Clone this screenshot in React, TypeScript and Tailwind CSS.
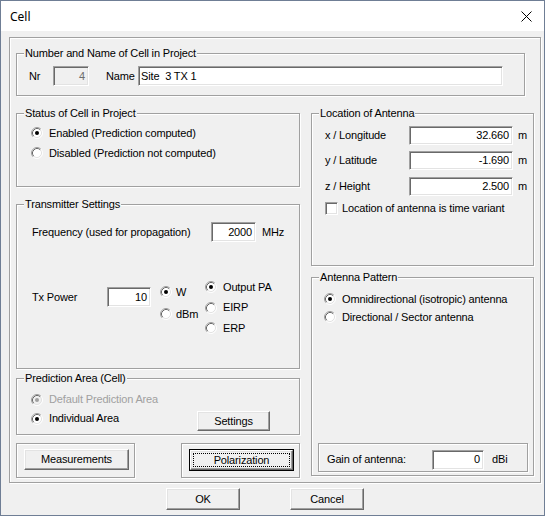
import React from "react";

const etched = "border border-[#a0a0a0] shadow-[1px_1px_0_#fff,inset_1px_1px_0_#fff]";
const sunken =
  "border border-t-[#a0a0a0] border-l-[#a0a0a0] border-r-white border-b-white shadow-[inset_1px_1px_0_#696969,inset_-1px_-1px_0_#e3e3e3]";
const raised =
  "border border-t-white border-l-white border-r-[#696969] border-b-[#696969] shadow-[inset_-1px_-1px_0_#a0a0a0,inset_1px_1px_0_#e3e3e3]";

function Group({ label, className = "", children }: { label: string; className?: string; children?: React.ReactNode }) {
  return (
    <div className={`relative shrink-0 ${etched} ${className}`}>
      <span className="absolute left-[7px] -top-[7px] px-[1px] bg-[#f0f0f0] leading-[13px] whitespace-nowrap">{label}</span>
      {children}
    </div>
  );
}

function Radio({ checked = false, disabled = false }: { checked?: boolean; disabled?: boolean }) {
  return (
    <svg width="12" height="12" viewBox="0 0 12 12" className="shrink-0">
      <circle cx="6" cy="6" r="5" fill={disabled ? "#f0f0f0" : "#fff"} />
      <path d="M2.11 9.89A5.5 5.5 0 0 1 9.89 2.11" fill="none" stroke="#a0a0a0" />
      <path d="M9.89 2.11A5.5 5.5 0 0 1 2.11 9.89" fill="none" stroke="#fff" />
      <path d="M2.82 9.18A4.5 4.5 0 0 1 9.18 2.82" fill="none" stroke="#696969" />
      <path d="M9.18 2.82A4.5 4.5 0 0 1 2.82 9.18" fill="none" stroke="#e3e3e3" />
      {checked && <circle cx="6" cy="6" r="2" fill={disabled ? "#a0a0a0" : "#000"} />}
    </svg>
  );
}

function RadioRow({
  label,
  checked = false,
  disabled = false,
  className = "",
  gap = "ml-[6px]",
}: {
  label: string;
  checked?: boolean;
  disabled?: boolean;
  className?: string;
  gap?: string;
}) {
  return (
    <div className={`flex items-center ${className}`}>
      <Radio checked={checked} disabled={disabled} />
      <span className={`${gap} whitespace-nowrap ${disabled ? "text-[#a0a0a0]" : ""}`}>{label}</span>
    </div>
  );
}

function Field({
  value,
  className = "",
  disabled = false,
  left = false,
}: {
  value: string;
  className?: string;
  disabled?: boolean;
  left?: boolean;
}) {
  return (
    <div
      className={`shrink-0 flex items-center whitespace-pre ${sunken} ${
        disabled ? "bg-[#f0f0f0] text-[#6d6d6d]" : "bg-white"
      } ${left ? "justify-start pl-[2px]" : "justify-end pr-[3px]"} ${className}`}
    >
      {value}
    </div>
  );
}

function Button({ label, className = "" }: { label: string; className?: string }) {
  return (
    <div className={`shrink-0 flex items-center justify-center bg-[#f0f0f0] ${raised} ${className}`}>{label}</div>
  );
}

function DefaultButton({ label, className = "" }: { label: string; className?: string }) {
  return (
    <div className={`shrink-0 border border-black flex ${className}`}>
      <div className={`flex-1 flex p-[2px] bg-[#f0f0f0] ${raised}`}>
        <div className="flex-1 flex items-center justify-center border border-dotted border-black">{label}</div>
      </div>
    </div>
  );
}

export default function App() {
  return (
    <div className="w-[545px] h-[516px] border border-[#6f7e95] bg-[#f0f0f0] flex flex-col text-black text-[11px] tracking-[-0.15px] leading-[13px] font-['Liberation_Sans',Arial,sans-serif] overflow-hidden">
      {/* Title bar */}
      <div className="h-[30px] shrink-0 bg-white flex items-center justify-between pl-[9px] pr-[12px]">
        <span className="text-[12px] tracking-normal font-['Noto_Sans',sans-serif]">Cell</span>
        <svg width="11" height="11" viewBox="0 0 11 11">
          <path d="M0.5 0.5L10.5 10.5M10.5 0.5L0.5 10.5" stroke="#000" strokeWidth="1" />
        </svg>
      </div>

      {/* Main frame */}
      <div className={`ml-[8px] mt-[6px] w-[532px] h-[446px] shrink-0 pl-[6px] pt-[15px] ${etched}`}>
        <Group label="Number and Name of Cell in Project" className="w-[509px] h-[43px] pl-[12px] pt-[12px]">
          <div className="flex items-center h-[20px]">
            <span className="w-[24px]">Nr</span>
            <Field value="4" disabled className="w-[36px] h-[20px]" />
            <span className="ml-[17px] w-[32px]">Name</span>
            <Field value="Site  3 TX 1" left className="w-[365px] h-[20px]" />
          </div>
        </Group>

        <div className="flex items-start mt-[17px]">
          {/* Left column */}
          <div className="w-[284px] flex flex-col shrink-0">
            <Group label="Status of Cell in Project" className="h-[74px] pl-[14px] pt-[9px]">
              <RadioRow label="Enabled (Prediction computed)" checked className="h-[20px]" />
              <RadioRow label="Disabled (Prediction not computed)" className="h-[20px]" />
            </Group>

            <Group label="Transmitter Settings" className="mt-[17px] h-[165px] pl-[15px] pt-[17px]">
              <div className="flex items-center h-[20px]">
                <span className="w-[179px] whitespace-nowrap">Frequency (used for propagation)</span>
                <Field value="2000" className="w-[45px] h-[20px]" />
                <span className="ml-[6px]">MHz</span>
              </div>
              <div className="flex items-start mt-[35px]">
                <div className="flex items-center mt-[10px] h-[20px]">
                  <span className="w-[75px]">Tx Power</span>
                  <Field value="10" className="w-[44px] h-[20px]" />
                </div>
                <div className="ml-[9px] w-[45px] mt-[4px] flex flex-col">
                  <RadioRow label="W" checked gap="ml-[4px]" className="h-[22px]" />
                  <RadioRow label="dBm" gap="ml-[4px]" className="h-[22px]" />
                </div>
                <div className="flex flex-col">
                  <RadioRow label="Output PA" checked className="h-[20.5px]" />
                  <RadioRow label="EIRP" className="h-[20.5px]" />
                  <RadioRow label="ERP" className="h-[20.5px]" />
                </div>
              </div>
            </Group>

            <Group label="Prediction Area (Cell)" className="mt-[9px] h-[57px] pl-[14px] pt-[11px]">
              <RadioRow label="Default Prediction Area" checked disabled className="h-[19px]" />
              <div className="flex items-center h-[19px]">
                <div className="w-[166px] flex items-center">
                  <Radio checked />
                  <span className="ml-[6px]">Individual Area</span>
                </div>
                <Button label="Settings" className="w-[73px] h-[20px] mt-[5px]" />
              </div>
            </Group>

            <div className="flex mt-[8px]">
              <div className={`w-[119px] h-[35px] pl-[7px] pt-[5px] ${etched}`}>
                <Button label="Measurements" className="w-[105px] h-[21px]" />
              </div>
              <div className={`ml-[46px] w-[119px] h-[35px] pl-[7px] pt-[5px] ${etched}`}>
                <DefaultButton label="Polarization" className="w-[105px] h-[22px]" />
              </div>
            </div>
          </div>

          {/* Right column */}
          <div className="w-[223px] ml-[11px] flex flex-col shrink-0">
            <Group label="Location of Antenna" className="h-[153px] pl-[13px] pt-[12px]">
              <div className="flex items-center h-[19px]">
                <span className="w-[84px]">x / Longitude</span>
                <Field value="32.660" className="w-[104px] h-[19px]" />
                <span className="ml-[5px]">m</span>
              </div>
              <div className="flex items-center h-[19px] mt-[6px]">
                <span className="w-[84px]">y / Latitude</span>
                <Field value="-1.690" className="w-[104px] h-[19px]" />
                <span className="ml-[5px]">m</span>
              </div>
              <div className="flex items-center h-[19px] mt-[7px]">
                <span className="w-[84px]">z / Height</span>
                <Field value="2.500" className="w-[104px] h-[19px]" />
                <span className="ml-[5px]">m</span>
              </div>
              <div className="flex items-center h-[13px] mt-[6px]">
                <div className={`w-[13px] h-[13px] shrink-0 bg-white ${sunken}`} />
                <span className="ml-[4px] whitespace-nowrap">Location of antenna is time variant</span>
              </div>
            </Group>

            <Group label="Antenna Pattern" className="mt-[11px] h-[199px] flex flex-col">
              <div className="pl-[12px] pt-[12px]">
                <RadioRow label="Omnidirectional (isotropic) antenna" checked className="h-[18px]" />
                <RadioRow label="Directional / Sector antenna" className="h-[18px]" />
              </div>
              <div className={`mt-auto mb-[3px] ml-[6px] w-[210px] h-[29px] flex items-center pl-[8px] pt-[4px] ${etched}`}>
                <span className="w-[105px]">Gain of antenna:</span>
                <Field value="0" className="w-[52px] h-[20px]" />
                <span className="ml-[8px]">dBi</span>
              </div>
            </Group>
          </div>
        </div>
      </div>

      {/* Bottom buttons */}
      <div className="flex mt-[5px] pl-[165px]">
        <Button label="OK" className="w-[74px] h-[22px]" />
        <Button label="Cancel" className="ml-[50px] w-[74px] h-[22px]" />
      </div>
    </div>
  );
}
